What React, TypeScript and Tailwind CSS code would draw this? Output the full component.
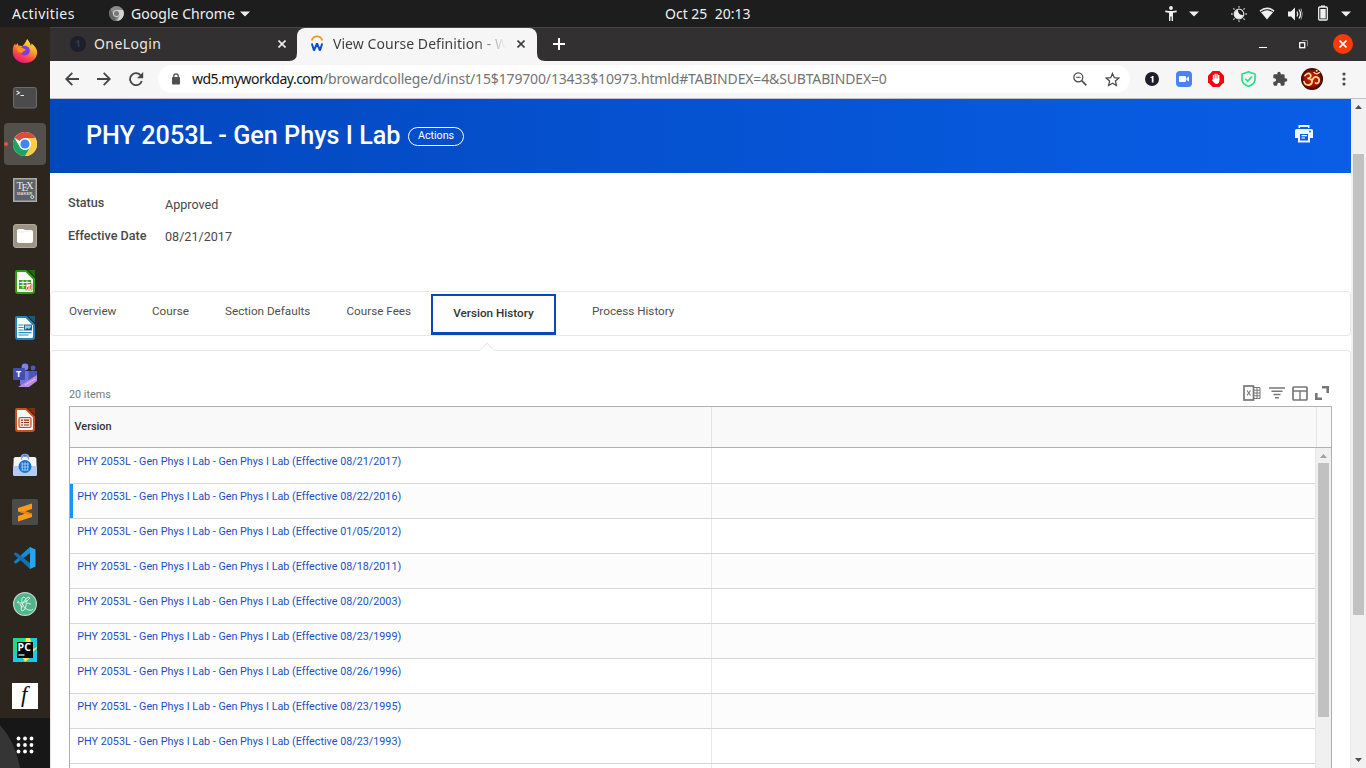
import type { ReactNode } from "react";

const UI = "font-['Noto_Sans',sans-serif]";

function Dock() {
  const icons: ReactNode[] = [
    <svg key="firefox" className="mb-[2px]" width="26" height="26" viewBox="0 0 26 26">
      <defs>
        <linearGradient id="ff" x1="0.8" y1="0" x2="0.3" y2="1">
          <stop offset="0" stopColor="#fff04a" />
          <stop offset="0.4" stopColor="#ffa32b" />
          <stop offset="0.75" stopColor="#ff3d4c" />
          <stop offset="1" stopColor="#e31587" />
        </linearGradient>
      </defs>
      <path d="M1.500 8 3 5.500l.8 2 1.700-2.600.8 2.600 4.200.6L13 5l2.200-4 2.600 3.700 1.200 3.200.6-2.400C23 8 25.200 11 25.200 14.500 24.800 21 19.500 25 13 25S1 20.500 .8 14.500C.7 12 .9 10 1.500 8Z" fill="url(#ff)" />
      <path d="M8 12.500C8 9 11 7 14 8c3.500 1 4.500 4 3.500 6.500-1 2.500-3.500 3.500-6 2.900C9.500 17 8 15 8 12.500Z" fill="#7a3fe0" />
      <path d="M5 10c2-1.500 5-.7 6 .3 1.200.8 2.600.6 2.600 1.200-.4 1.700-3 1.600-3.300 3.200C7 15 5 13 5 10Z" fill="#ff980e" />
    </svg>,
    <svg key="terminal" width="24" height="22" viewBox="0 0 24 22">
      <rect x=".5" y=".5" width="23" height="20.500" rx="2" fill="#4b4b4c" stroke="#6b6b6b" />
      <path d="m3.500 4 3 1.800-3 1.800M7.500 8.500h3.500" fill="none" stroke="#e6e6e6" strokeWidth="1.100" />
    </svg>,
    <svg key="chrome" width="24" height="24" viewBox="0 0 24 24">
      <circle cx="12" cy="12" r="12" fill="#fff" />
      <path d="M1.600 6A12 12 0 0 1 22.400 6H12a6 6 0 0 0-5.200 3Z" fill="#dd4b3e" />
      <path d="M22.400 6A12 12 0 0 1 12 24l5.200-9A6 6 0 0 0 12 6Z" fill="#ffcd40" />
      <path d="M1.600 6A12 12 0 0 0 12 24l5.200-9a6 6 0 0 1-10.400 0Z" fill="#1ea362" />
      <circle cx="12" cy="12" r="5.600" fill="#fff" />
      <circle cx="12" cy="12" r="4.600" fill="#4285f4" />
    </svg>,
    <svg key="tex" width="24" height="24" viewBox="0 0 24 24">
      <rect x=".75" y=".75" width="22.500" height="22.500" fill="#5e6367" stroke="#a9abad" strokeWidth="1.500" />
      <text x="3.500" y="10.500" fontSize="10.500" fontFamily="Liberation Serif" fill="#e9e9e9">T</text>
      <text x="8.500" y="13" fontSize="10.500" fontFamily="Liberation Serif" fill="#e9e9e9">E</text>
      <text x="13" y="10.500" fontSize="10.500" fontFamily="Liberation Serif" fill="#e9e9e9">X</text>
      <text x="4" y="17" fontSize="4.200" fontWeight="bold" fontFamily="Liberation Sans" fill="#d5d5d5">MAKER</text>
      <circle cx="19.300" cy="19" r="1.500" fill="none" stroke="#ddd" />
    </svg>,
    <svg key="files" width="24" height="24" viewBox="0 0 24 24">
      <rect x=".5" y=".5" width="23" height="23" rx="2.500" fill="#9b9484" stroke="#b0a999" />
      <path d="M4 7q0-2 2-2h4l2 1h6q2 0 2 2v9q0 2-2 2H6q-2 0-2-2Z" fill="#fff" />
      <path d="M4.500 8h7l1-1h6" fill="none" stroke="#e9e6df" strokeWidth=".8" />
    </svg>,
    <OfficeDoc key="calc" color="#2f9e13" dark="#1c6b0b">
      <rect x="4" y="10" width="12" height="9" fill="#3ba61f" />
      <path d="M4.500 12.500h11M4.500 15.500h11M8 10.500v8M12 10.500v8" stroke="#fff" />
      <rect x="11" y="14" width="6" height="6" fill="#fff" stroke="#a5673e" strokeWidth=".7" />
      <path d="M12.500 19v-2M14 19v-3M15.700 19v-4" stroke="#d1543b" />
    </OfficeDoc>,
    <OfficeDoc key="writer" color="#1f86bd" dark="#145a83">
      <path d="M3.500 9h5M3.500 11.500h5M3.500 14h5M3.500 16.700h13M3.500 19h10" stroke="#2d8dc4" strokeWidth="1.200" />
      <rect x="9.500" y="9" width="7" height="5" fill="#8ecbe9" stroke="#286c98" />
      <path d="m10 14 2-2 2 1 2-2v3Z" fill="#205274" />
    </OfficeDoc>,
    <svg key="teams" className="mt-[2px]" width="26" height="24" viewBox="0 0 26 24">
      <circle cx="13" cy="4" r="3.400" fill="#7b83eb" />
      <circle cx="21" cy="5" r="2.400" fill="#5059c9" />
      <path d="M8 8h10v9a5 5 0 0 1-10 4Z" fill="#6d76de" />
      <path d="M16.500 8H25v7q-1 4-6 5h-2.500Z" fill="#4d55bd" />
      <rect x="1" y="5" width="12" height="12" rx="1" fill="#464bb2" />
      <text x="4" y="14" fontSize="9" fontWeight="bold" fontFamily="Open Sans" fill="#fff">T</text>
      <path d="M6 24 25 12v6l-8 6Z" fill="#bd8be2" />
      <path d="m13 22 10-6" stroke="#e5cdf4" strokeDasharray="1.500 .5" />
    </svg>,
    <OfficeDoc key="impress" color="#c9501d" dark="#81300e">
      <rect x="4" y="9.500" width="12" height="10" rx="1.500" fill="#f6e1d6" stroke="#b84a1f" strokeWidth="1.200" />
      <path d="M6 12.200h2M6 14.500h2M6 17h2M9 12.200h5M9 14.500h5M9 17h5" stroke="#8b3512" strokeWidth="1.200" />
    </OfficeDoc>,
    <svg key="software" className="mb-[3px]" width="24" height="24" viewBox="0 0 24 24">
      <path d="M8 6c0-6 8-6 8 0" fill="none" stroke="#86a4e9" strokeWidth="1.500" />
      <path d="M2.500 4h19q1.500 0 1.800 1.500L24 21q0 2-2 2H2q-2 0-2-2L.7 5.500Q1 4 2.500 4Z" fill="#f5f5f5" />
      <path d="M.4 13h23.200L24 21q0 2-2 2H2q-2 0-2-2Z" fill="#b4cbf8" />
      <path d="M8.300 6.500c0-4.500 7.400-4.500 7.400 0" fill="none" stroke="#86a4e9" strokeWidth="1.300" />
      <circle cx="12" cy="13.500" r="6.500" fill="#1b75d0" />
      <path d="M8 11h8M8 14h8M8.500 17h7M9.300 9.500v8M12 9v9M14.700 9.500v8" stroke="#c0dafa" strokeWidth=".7" />
    </svg>,
    <svg key="sublime" width="26" height="26" viewBox="0 0 26 26">
      <rect width="26" height="26" rx="1.500" fill="#4b4b4b" />
      <path d="M6 9 20 4.500V10l-7 2.200 7 2.300v3.500L6 22.500V17l7-2.300L6 12.500Z" fill="#ff9a1a" />
      <path d="m6 12.500 7-.3 7 2.300v1.500l-7-1.300Z" fill="#e5840c" />
    </svg>,
    <svg key="vscode" width="24" height="24" viewBox="0 0 24 24">
      <path d="m17 1 5.500 2.500v17L17 23Z" fill="#2ba3ee" />
      <path d="M17 1v6L3.500 17.300l-1.300.2L.7 16Z" fill="#1480ca" />
      <path d="M17 23v-6L3.500 6.700l-1.300-.2L.7 8Z" fill="#1070b6" />
      <path d="M17 1v6l-6 4.600L8 9.300Z" fill="#1a88d2" />
    </svg>,
    <svg key="atom" width="24" height="24" viewBox="0 0 24 24">
      <circle cx="12" cy="12" r="11.400" fill="#4eb68a" stroke="#c6d4ce" strokeWidth="1.200" />
      <g fill="none" stroke="#e0f5eb" strokeWidth=".9">
        <path d="M6 9q-3 1-1 2 4 1 9-2 4-3 2-4-3 0-6 6-3 6-1 8 3 0 4-5 1-7-2-9-3 0-2 6 2 6 6 7 4 1 5-1" />
        <path d="M7 12q1 4 3 3m4-4 4 1" />
      </g>
    </svg>,
    <svg key="pycharm" width="24" height="24" viewBox="0 0 24 24">
      <rect width="24" height="24" fill="#21d789" />
      <path d="M13 0h5l6 8v6L12 24H8Z" fill="#f1ed4c" />
      <path d="M17 0h7v9l-4 2ZM0 24l2-12 8 8 2 4ZM20 14l4-4v14H14Z" fill="#1fc8dc" />
      <rect x="4" y="4" width="16" height="16" fill="#050505" />
      <text x="4.600" y="12.800" fontSize="10.500" fontWeight="bold" fontFamily="Open Sans" fill="#fff">PC</text>
      <path d="M5.500 17h6" stroke="#fff" strokeWidth="1.200" />
    </svg>,
    <svg key="f" width="26" height="26" viewBox="0 0 26 26">
      <rect width="26" height="26" fill="#fff" />
      <text x="9" y="19" fontSize="23" fontStyle="italic" fontFamily="Liberation Serif" fill="#111">f</text>
    </svg>,
  ];
  return (
    <nav className="relative flex w-[50px] shrink-0 flex-col overflow-hidden bg-[#2c261f] pt-[2px]">
      <div className="absolute inset-x-0 bottom-0 h-[50px] bg-[#171717]">
        <svg width="50" height="50"><path d="M0 7Q16 25 20 50H0Z" fill="#353535" /></svg>
      </div>
      {icons.map((icon, i) => (
        <div key={i} className="relative flex h-[46px] shrink-0 items-center justify-center">
          {i === 2 && <span className="absolute top-[2px] left-1 h-[42px] w-[42px] rounded-[4px] bg-[#534f4a]" />}
          {i === 2 && <span className="absolute top-[21px] left-[4px] h-[4px] w-[4px] rounded-full bg-[#f0532b]" />}
          <span className="relative flex">{icon}</span>
        </div>
      ))}
      <div className="relative flex flex-1 items-center justify-center pt-[3px]">
        <svg width="18" height="18" viewBox="0 0 18 18" fill="#fff">
          {[2.500, 9, 15.500].flatMap((y) => [2.500, 9, 15.500].map((x) => <circle key={`${x}-${y}`} cx={x} cy={y} r="1.900" />))}
        </svg>
      </div>
    </nav>
  );
}

function OfficeDoc({ color, dark, children }: { color: string; dark: string; children: ReactNode }) {
  return (
    <svg width="20" height="24" viewBox="0 0 20 24">
      <path d="M2 1h9l8 8v12q0 2-2 2H3q-2 0-2-2V2q0-1 1-1Z" fill="#fafafa" stroke={color} strokeWidth="2" />
      <path d="M13 0h7v7Z" fill={dark} />
      {children}
    </svg>
  );
}

function Caret({ className = "" }: { className?: string }) {
  return <svg className={className} width="10" height="6" viewBox="0 0 10 6"><path d="M0 .5h10L5 5.500Z" fill="#f0f0f0" /></svg>;
}

function TopBar() {
  return (
    <header className={`${UI} flex h-[27px] shrink-0 items-center bg-[#1d1d1d] text-[14px] whitespace-pre text-[#f0f0f0]`}>
      <span className="w-[109px] pl-3 tracking-[0.450px]">Activities</span>
      <svg className="mr-[7px]" width="15" height="15" viewBox="0 0 15 15">
        <circle cx="7.500" cy="7.500" r="7.500" fill="#8b8b8b" />
        <path d="M7.500 4H14a7.500 7.500 0 0 1-6 11l3-6Z" fill="#d3d3d3" />
        <path d="M1.500 3.500 4.600 9l3 2-2 4A7.500 7.500 0 0 1 1.500 3.500Z" fill="#666" />
        <circle cx="7.500" cy="7.500" r="3.600" fill="#d0d0d0" />
        <circle cx="7.500" cy="7.500" r="2.500" fill="#777" />
      </svg>
      <span className="w-[109px] tracking-[0.040px]">Google Chrome</span>
      <Caret />
      <span className="ml-[415px] w-[500px]">Oct 25  20:13</span>
      <svg width="12" height="15" viewBox="0 0 12 15" fill="#f0f0f0">
        <circle cx="6" cy="2" r="1.900" />
        <path d="M.3 4.500 4 5h4l3.700-.5v1.700L8 6.800V15H6.600v-4.500H5.400V15H4V6.800L.3 6.200Z" />
      </svg>
      <Caret className="ml-3" />
      <svg className="ml-[32px]" width="16" height="16" viewBox="0 0 16 16">
        <circle cx="8" cy="8" r="4.800" fill="none" stroke="#ddd" strokeWidth="1.200" />
        <path d="M7 4a4.500 4.500 0 0 0 5 5 4.300 4.300 0 1 1-5-5Z" fill="#eee" />
        <path d="M8 0v1.800M8 14.200V16M0 8h1.800M14.200 8H16M2.300 2.300l1.300 1.300m8.800 8.800 1.300 1.300M2.300 13.700l1.300-1.300m8.800-8.800 1.300-1.300" stroke="#bbb" strokeWidth="1.300" />
      </svg>
      <svg className="ml-[12px]" width="16" height="13" viewBox="0 0 16 13">
        <path d="M.5 3.500Q8-2.500 15.500 3.500L8 12.500Z" fill="#f0f0f0" />
        <path d="M2.200 4.800Q8 .6 13.800 4.800" stroke="#1d1d1d" strokeWidth="1.100" fill="none" />
      </svg>
      <svg className="ml-[13px]" width="15" height="14" viewBox="0 0 15 14">
        <path d="M0 4.500h3l4-4v13l-4-4H0Z" fill="#f0f0f0" />
        <path d="M9 4.500q1.500 2.500 0 5M11 2.500q3 4.500 0 9" stroke="#f0f0f0" strokeWidth="1.300" fill="none" />
        <path d="M13 1.500q2.500 5.500 0 11" stroke="#999" strokeWidth="1" fill="none" />
      </svg>
      <svg className="mb-px ml-[15px]" width="10" height="16" viewBox="0 0 10 16">
        <path d="M3 1.200h4" stroke="#f0f0f0" strokeWidth="1.500" />
        <rect x=".7" y="2" width="8.600" height="13" rx="1" fill="none" stroke="#f0f0f0" strokeWidth="1.300" />
        <path d="M2.300 4h5.400v9.500H2.300Z" fill="#f0f0f0" />
      </svg>
      <Caret className="ml-[13px]" />
    </header>
  );
}

function Cross({ color, className = "" }: { color: string; className?: string }) {
  return <svg className={className} width="8" height="8" viewBox="0 0 8 8"><path d="m.5.5 7 7m0-7-7 7" stroke={color} strokeWidth="1.600" /></svg>;
}

function TabStrip() {
  return (
    <div className={`${UI} flex h-[34px] shrink-0 items-center border-t border-[#484647] bg-[#333031] text-[14px] whitespace-nowrap`}>
      <div className="flex h-full w-[247px] items-center pb-[2px] pl-5">
        <svg className="shrink-0" width="16" height="16" viewBox="0 0 16 16">
          <circle cx="8" cy="8" r="8" fill="#1d1e2e" />
          <path d="m6.500 6 2-1v6" fill="none" stroke="#393a49" strokeWidth="1.500" />
        </svg>
        <span className="w-[192px] pl-2 tracking-[0.400px] text-[#e8e8e8]">OneLogin</span>
        <Cross color="#f0f0f0" />
      </div>
      <div className="relative flex h-full w-[240px] items-center rounded-t-[8px] bg-[#f6f6f6] pb-[2px] pl-[12px]">
        <svg className="absolute bottom-0 -left-2" width="8" height="8"><path d="M8 0v8H0Q8 8 8 0Z" fill="#f6f6f6" /></svg>
        <svg className="absolute -right-2 bottom-0" width="8" height="8"><path d="M0 0v8h8Q0 8 0 0Z" fill="#f6f6f6" /></svg>
        <svg width="16" height="17" viewBox="0 0 16 17" fill="none">
          <path d="M2.700 5.500c1.500-5.500 9.100-5.500 10.600 0" stroke="#f8951d" strokeWidth="1.800" />
          <path d="m2.800 8.500 2.200 7L8 8.500l3 7 2.200-7" stroke="#0b50c3" strokeWidth="2" strokeLinejoin="bevel" />
        </svg>
        <span className="ml-[8px] w-[176px] overflow-hidden bg-linear-to-r from-[#3c3c3c] from-82% to-transparent to-98% bg-clip-text tracking-[0.050px] text-transparent">View Course Definition - W</span>
        <Cross className="ml-[8px]" color="#3d3d3d" />
      </div>
      <svg className="mb-px ml-[16px]" width="12" height="12"><path d="M6 0v12M0 6h12" stroke="#fff" strokeWidth="2" /></svg>
      <span className="mt-[5px] ml-[694px] h-px w-[8px] bg-white" />
      <svg className="mb-px ml-[32px]" width="9" height="9" viewBox="0 0 9 9" fill="none"><path d="M3 .5h5.500V6" stroke="#888" /><rect x=".7" y="2.700" width="5" height="5" stroke="#fff" strokeWidth="1.300" /></svg>
      <span className="mb-px ml-[25px] flex h-5 w-5 items-center justify-center rounded-full bg-[#fa3a0a]"><Cross color="#fff" /></span>
    </div>
  );
}

function Toolbar() {
  return (
    <div className={`${UI} flex h-[38px] shrink-0 items-center border-b border-[#bfc3c7] bg-[#f6f6f6] pb-px text-[14px]`}>
      <svg className="ml-[15px]" width="14" height="14" viewBox="0 0 14 14" fill="none" stroke="#454545" strokeWidth="1.800"><path d="M14 7H1.500M7.300.8 1.200 7l6.100 6.200" /></svg>
      <svg className="ml-[18px]" width="14" height="14" viewBox="0 0 14 14" fill="none" stroke="#454545" strokeWidth="1.800"><path d="M0 7h12.500M6.700.8 12.800 7l-6.100 6.200" /></svg>
      <svg className="ml-[18px]" width="15" height="14" viewBox="0 0 15 14"><path d="M12.800 9A6 6 0 1 1 11.400 3" fill="none" stroke="#454545" strokeWidth="1.800" /><path d="M14.200 0v6.200H8Z" fill="#454545" /></svg>
      <div className="ml-[14px] flex h-7 w-[972px] items-center rounded-full bg-white pl-[14px] whitespace-nowrap">
        <svg className="mb-px" width="8" height="12" viewBox="0 0 8 12"><rect y="4" width="8" height="7.500" rx="1" fill="#505050" /><path d="M1.800 5V3a2.200 2.200 0 0 1 4.400 0v2" fill="none" stroke="#505050" strokeWidth="1.300" /></svg>
        <span className="mb-[2px] ml-3 w-[131px] tracking-[-0.500px] text-[#151515]">wd5.myworkday.com</span>
        <span className="mb-[2px] w-[750px] tracking-[-0.150px] text-[#737373]">/browardcollege/d/inst/15$179700/13433$10973.htmld#TABINDEX=4&amp;SUBTABINDEX=0</span>
        <svg width="14" height="14" viewBox="0 0 14 14" fill="none" stroke="#4c4c4c"><circle cx="5.300" cy="5.300" r="4.500" strokeWidth="1.300" /><path d="M3 5.300h4.600" /><path d="m8.700 8.700 4.600 4.600" strokeWidth="1.700" /></svg>
        <svg className="ml-[18px]" width="15" height="15" viewBox="0 0 15 15"><path d="m7.500 1.500 1.800 4.200 4.500.4-3.400 3 1 4.400-3.900-2.300-3.900 2.300 1-4.400-3.400-3 4.500-.4Z" fill="none" stroke="#4c4c4c" strokeWidth="1.300" /></svg>
      </div>
      <svg className="ml-[15px]" width="14" height="14" viewBox="0 0 14 14"><circle cx="7" cy="7" r="7" fill="#1c1e2e" /><path d="M5 5.500h1L7 4h1.500v6.500H6.800V6H5Z" fill="#fff" /></svg>
      <svg className="ml-[17px]" width="16" height="16" viewBox="0 0 16 16"><rect width="16" height="16" rx="4" fill="#4b83f5" /><rect x="3" y="5" width="7" height="6" rx="1" fill="#fff" /><path d="m10.500 7 2.500-1.500v5L10.500 9Z" fill="#fff" /></svg>
      <svg className="ml-4" width="16" height="16" viewBox="0 0 16 16"><path d="M4.700 0h6.600L16 4.700v6.600L11.300 16H4.700L0 11.300V4.700Z" fill="#f4020d" /><path d="M5.500 8V4.500M7.200 8V3.200M9 8V3.200M10.700 8.500V4.500" stroke="#fff" strokeWidth="1.300" strokeLinecap="round" /><path d="M4.900 7.500h6.500V10q-.5 3-3 3-1.800 0-4.500-4l1-.8Z" fill="#fff" /></svg>
      <svg className="ml-[17px]" width="15" height="16" viewBox="0 0 15 16" fill="none" stroke="#20e28c" strokeWidth="1.600"><path d="M7.500.8 14 3v6q-1 4.500-6.500 6.300Q2 13.500 1 9V3Z" /><path d="m4.300 7.700 2.400 2.400 4.300-4.500" /></svg>
      <svg className="ml-[16px]" width="16" height="16" viewBox="0 0 24 24" fill="#4b4b4b"><path d="M20.500 11H19V7a2 2 0 0 0-2-2h-4V3.500a2.500 2.500 0 0 0-5 0V5H4a2 2 0 0 0-2 2v3.800h1.500a2.700 2.700 0 0 1 0 5.400H2V20a2 2 0 0 0 2 2h3.800v-1.500a2.700 2.700 0 0 1 5.400 0V22H17a2 2 0 0 0 2-2v-4h1.500a2.500 2.500 0 0 0 0-5Z" /></svg>
      <svg className="ml-[13px]" width="22" height="22" viewBox="0 0 22 22">
        <defs><radialGradient id="om"><stop stopColor="#d52010" /><stop offset=".65" stopColor="#a41009" /><stop offset="1" stopColor="#310503" /></radialGradient></defs>
        <circle cx="11" cy="11" r="11" fill="url(#om)" />
        <g fill="none" stroke="#ffe184" strokeWidth="1.700" strokeLinecap="round">
          <path d="M4 7.500Q7 4 9.500 6.500 11 9.500 6.500 10.500 11.500 10.500 11 14.500 9 18.500 5 16.500 3.200 15.500 3 13.500" />
          <path d="M11 12.500q2-4.500 5-3.500 3 1.500 2 4.500-1.500 3-3.500 1.500" />
          <path d="M13 4.500q2.500 2.500 5.500 0" strokeWidth="1.300" />
        </g>
        <circle cx="15.700" cy="2.800" r="1" fill="#ffe184" />
      </svg>
      <svg className="ml-[19px]" width="4" height="14" viewBox="0 0 4 14" fill="#4b4b4b"><circle cx="2" cy="2" r="1.600" /><circle cx="2" cy="7" r="1.600" /><circle cx="2" cy="12" r="1.600" /></svg>
    </div>
  );
}

function Banner() {
  return (
    <div className="flex h-[74px] shrink-0 items-center bg-linear-to-r from-[#0347bd] to-[#095ee6] pl-[36px] text-white">
      <h1 className="w-[322px] pb-px text-[25.200px] leading-8 font-medium whitespace-nowrap">PHY 2053L - Gen Phys I Lab</h1>
      <button className="flex h-[19px] w-[56px] items-center justify-center rounded-full border border-white text-[10.700px]">Actions</button>
      <svg className="mr-[38.500px] mb-1 ml-auto" width="18" height="18" viewBox="0 0 18 18">
        <path d="M3.500 0h11v3h-11ZM1.500 4h15q1.500 0 1.500 1.500V13h-3v4.500H3V13H0V5.500Q0 4 1.500 4Z" fill="#f0f6ff" />
        <path d="M5 2h8v2H5ZM5 9h8v6.500H5Z" fill="#0c5ce0" />
        <path d="M6.500 10.700h5.500M6.500 13h3.500" stroke="#fff" strokeWidth="1.200" />
        <circle cx="15" cy="6.500" r=".9" fill="#0c5ce0" />
      </svg>
    </div>
  );
}

function Tabs() {
  return (
    <div className="mt-[43px] flex h-[45px] shrink-0 rounded-[4px] border border-[#e8e8e8] pl-[18px] text-[11.700px] leading-[38px] whitespace-nowrap text-[#4f4f4f]">
      <span className="w-[83px]">Overview</span>
      <span className="w-[73px]">Course</span>
      <span className="w-[121.500px]">Section Defaults</span>
      <span className="w-[84.500px]">Course Fees</span>
      <span className="mt-[2px] h-[41px] w-[125px] border-2 border-b-[3px] border-[#0a48b8] text-center leading-[35px] font-medium text-[#333]">Version History</span>
      <span className="pl-[36px]">Process History</span>
    </div>
  );
}

const dates = ["08/21/2017", "08/22/2016", "01/05/2012", "08/18/2011", "08/20/2003", "08/23/1999", "08/26/1996", "08/23/1995", "08/23/1993"];

function Grid() {
  return (
    <div className="mr-[18px] ml-[18px] flex min-h-0 flex-1 flex-col border border-b-0 border-[#b0b0b0]">
      <div className="flex h-[41px] shrink-0 border-b border-[#b0b0b0] bg-[#f9f9f9]">
        <div className="w-[642px] border-r border-[#e5e5e5] pl-[4.500px] text-[10.900px] leading-[39px] font-medium text-[#333]">Version</div>
        <div className="w-[605px] border-r border-[#e5e5e5]" />
      </div>
      <div className="flex min-h-0 flex-1 overflow-hidden">
        <div className="flex w-[1245px] flex-col">
          {dates.map((date, i) => (
            <div key={date} className={`flex shrink-0 border-b border-[#d6d6d6] ${i === 0 ? "h-[36px]" : "h-[35px]"} ${i % 2 ? "bg-[#fcfcfc]" : "bg-white"}`}>
              <div className={`w-[642px] border-r border-[#e8e8e8] text-[10.780px] whitespace-nowrap text-[#1a4fc4] ${i === 1 ? "border-l-[3px] border-l-[#1793f5] pl-[4.300px]" : "pl-[7.300px]"} ${i === 0 ? "leading-[27px]" : "leading-[25px]"}`}>
                PHY 2053L - Gen Phys I Lab - Gen Phys I Lab (Effective {date})
              </div>
            </div>
          ))}
          <div className="w-[642px] flex-1 border-r border-[#e8e8e8]" />
        </div>
        <div className="flex w-[16px] flex-col items-center border-l border-[#e6e6e6] bg-[#f0f0f0]">
          <svg className="mt-[6px] h-1 w-[7px]" viewBox="0 0 7 4"><path d="M0 4h7L3.500 0Z" fill="#a2a2a2" /></svg>
          <div className="mt-[5px] h-[254px] w-[11px] bg-[#c1c1c1]" />
        </div>
      </div>
    </div>
  );
}

function GridTools() {
  return (
    <div className="mt-[34px] flex h-[21px] shrink-0 items-start pr-[21px] pl-[18px] text-[10.800px] leading-[20px] text-[#6f7b86]">
      <span className="flex-1">20 items</span>
      <svg width="18" height="16" viewBox="0 0 18 16" fill="none" stroke="#777">
        <rect x="1" y="1" width="9.500" height="14" strokeWidth="1.700" />
        <path d="m4 5.500 3.500 5m0-5-3.500 5" strokeWidth="1.100" />
        <path d="M11 2.500h6v11h-6M11 5.200h6M11 8h6M11 10.800h6M14 2.500v11" />
      </svg>
      <svg className="mt-[2px] ml-2" width="16" height="12" viewBox="0 0 16 12" stroke="#777" strokeWidth="1.500"><path d="M0 1h16M2.500 4.200h11M4.500 7.400h7M6 10.700h4" /></svg>
      <svg className="mt-px ml-[7px]" width="16" height="15" viewBox="0 0 16 15" fill="none" stroke="#777"><rect x="1" y="1" width="14" height="13" rx=".7" strokeWidth="1.700" /><path d="M1 5h14M8 5v9" strokeWidth="1.400" /></svg>
      <svg className="mt-px ml-[7px]" width="14" height="14" viewBox="0 0 14 14" fill="none" stroke="#777" strokeWidth="2.600"><path d="M7 1.300h5.700V7M1.300 7v5.700H7" /></svg>
    </div>
  );
}

function PageScrollbar() {
  return (
    <div className="flex w-[15px] flex-col items-center bg-[#f1f1f1]">
      <svg className="mt-[6px] h-1 w-[7px]" viewBox="0 0 7 4"><path d="M0 4h7L3.500 0Z" fill="#505050" /></svg>
      <div className="mt-[45px] h-[461px] w-[11px] bg-[#c1c1c1]" />
      <svg className="mt-auto mb-[6px] h-1 w-[7px]" viewBox="0 0 7 4"><path d="M0 0h7L3.500 4Z" fill="#505050" /></svg>
    </div>
  );
}

export default function App() {
  return (
    <div className="flex h-[768px] w-[1366px] flex-col overflow-hidden">
      <TopBar />
      <div className="flex min-h-0 flex-1">
        <Dock />
        <div className="flex min-w-0 flex-1 flex-col">
          <TabStrip />
          <Toolbar />
          <div className="flex min-h-0 flex-1 bg-white font-[Roboto,sans-serif]">
            <main className="flex w-[1301px] flex-col">
              <Banner />
              <dl className="mt-[21px] grid shrink-0 grid-cols-[97px_1fr] pl-[18px] text-[12.600px] leading-[18px] text-[#494949]">
                <dt className="h-[33px] font-medium">Status</dt>
                <dd className="pt-[2px]">Approved</dd>
                <dt className="h-[21px] font-medium">Effective Date</dt>
                <dd className="pt-px">08/21/2017</dd>
              </dl>
              <Tabs />
              <section className="relative mt-[14px] flex min-h-0 flex-1 flex-col rounded-t-[4px] border border-b-0 border-[#e8e8e8]">
                <svg className="absolute -top-[9px] left-[429px]" width="14" height="10" viewBox="0 0 14 10"><path d="M0 8.500 7 .8l7 7.700V10H0Z" fill="#fff" /><path d="M0 8.500 7 .8l7 7.700" fill="none" stroke="#e3e3e3" /></svg>
                <GridTools />
                <Grid />
              </section>
            </main>
            <PageScrollbar />
          </div>
        </div>
      </div>
    </div>
  );
}
